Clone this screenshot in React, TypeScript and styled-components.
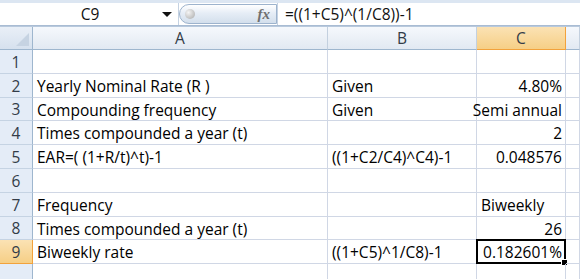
import React from 'react'
import styled, { createGlobalStyle } from 'styled-components'

const GlobalStyle = createGlobalStyle`
  html, body {
    margin: 0;
    padding: 0;
    background: #ffffff;
    overflow: hidden;
  }
  body {
    font-family: "Open Sans", "Liberation Sans", sans-serif;
  }
`

const Window = styled.div`
  width: 580px;
  height: 279px;
  overflow: hidden;
  display: flex;
  flex-direction: column;
  background: #ffffff;
`

const FormulaBar = styled.div`
  display: flex;
  align-items: stretch;
  border-top: 3px solid #dce6f2;
  border-bottom: 1px solid #a9bcd3;
  box-sizing: border-box;
  height: 32px;
`

const NameBox = styled.div`
  width: 179px;
  box-sizing: border-box;
  display: flex;
  align-items: center;
  border-right: 1px solid #c5d2e2;
  font-size: 15.5px;
  color: #111;
`

const NameText = styled.span`
  flex: 1;
  text-align: center;
  padding-left: 18px;
`

const DropArrow = styled.span`
  width: 0;
  height: 0;
  border-left: 5px solid transparent;
  border-right: 5px solid transparent;
  border-top: 5px solid #111;
  margin-right: 6px;
`

const FxPill = styled.div`
  width: 98px;
  box-sizing: border-box;
  margin: 1px 0;
  display: flex;
  align-items: center;
  justify-content: space-between;
  padding: 0 6px 0 5px;
  border: 1px solid #9db3cd;
  border-radius: 14px 0 0 14px;
  background: linear-gradient(#ffffff 0%, #e6edf6 45%, #d3dfec 100%);
`

const Knob = styled.span`
  width: 10px;
  height: 10px;
  border-radius: 50%;
  background: radial-gradient(circle at 35% 35%, #f4f4f4, #a8a8a8);
`

const FxLabel = styled.span`
  font-family: "Liberation Serif", serif;
  font-style: italic;
  font-weight: bold;
  font-size: 15px;
  color: #707070;
`

const FormulaText = styled.div`
  flex: 1;
  display: flex;
  align-items: center;
  padding-left: 7px;
  font-size: 15.5px;
  color: #111;
  border-left: 1px solid #c5d2e2;
`

const Gap = styled.div`
  height: 2px;
  border-bottom: 1px solid #b8c9dd;
  background: #f4f7fb;
`

const Sheet = styled.div`
  display: grid;
  grid-template-columns: 33px 295px 149px 89px 1fr;
`

const Corner = styled.div`
  height: 23px;
  box-sizing: border-box;
  position: relative;
  background: linear-gradient(#e9eff7, #d6e1ee);
  border-right: 1px solid #9eb6ce;
  border-bottom: 1px solid #9eb6ce;

  &::after {
    content: '';
    position: absolute;
    right: 3px;
    bottom: 3px;
    width: 0;
    height: 0;
    border-left: 13px solid transparent;
    border-bottom: 13px solid #c6d3e2;
  }
`

const ColHeader = styled.div<{ $active?: boolean }>`
  height: 23px;
  box-sizing: border-box;
  display: flex;
  align-items: center;
  justify-content: center;
  font-size: 15.5px;
  color: #333c48;
  background: ${p =>
    p.$active
      ? 'linear-gradient(#fbe2b4, #f6cf86)'
      : 'linear-gradient(#f5f8fc, #e2e9f2)'};
  border-right: 1px solid ${p => (p.$active ? '#f2a23c' : '#c3d0df')};
  border-bottom: 1px solid ${p => (p.$active ? '#f2a23c' : '#9eb6ce')};
`

const RowHeader = styled.div<{ $h: number; $active?: boolean }>`
  height: ${p => p.$h}px;
  box-sizing: border-box;
  display: flex;
  align-items: center;
  justify-content: center;
  font-size: 15.5px;
  color: #333c48;
  background: ${p => (p.$active ? 'linear-gradient(#fbe2b4, #f6cf86)' : '#e4ecf7')};
  border-right: 1px solid ${p => (p.$active ? '#f2a23c' : '#9eb6ce')};
  border-bottom: 1px solid ${p => (p.$active ? '#f2a23c' : '#c5d3e3')};
`

const Cell = styled.div<{ $h: number; $right?: boolean }>`
  height: ${p => p.$h}px;
  box-sizing: border-box;
  position: relative;
  display: flex;
  align-items: center;
  justify-content: ${p => (p.$right ? 'flex-end' : 'flex-start')};
  padding: 1px 3px 0 4px;
  font-size: 15.5px;
  color: #000;
  white-space: nowrap;
  border-right: 1px solid #d0d7e5;
  border-bottom: 1px solid #d0d7e5;
`

const Selection = styled.div`
  position: absolute;
  left: -1px;
  top: -1px;
  right: -1px;
  bottom: -1px;
  border: 2px solid #000;
  pointer-events: none;

  &::after {
    content: '';
    position: absolute;
    right: -4px;
    bottom: -4px;
    width: 5px;
    height: 5px;
    background: #000;
    border: 1px solid #fff;
  }
`

type Row = { n: number; h: number; a?: string; b?: string; c?: string; cRight?: boolean }

const rows: Row[] = [
  { n: 1, h: 24 },
  { n: 2, h: 24, a: 'Yearly Nominal Rate (R )', b: 'Given', c: '4.80%', cRight: true },
  { n: 3, h: 23, a: 'Compounding frequency', b: 'Given', c: 'Semi annual', cRight: true },
  { n: 4, h: 24, a: 'Times compounded a year (t)', c: '2', cRight: true },
  { n: 5, h: 24, a: 'EAR=( (1+R/t)^t)-1', b: '((1+C2/C4)^C4)-1', c: '0.048576', cRight: true },
  { n: 6, h: 24 },
  { n: 7, h: 24, a: 'Frequency', c: 'Biweekly' },
  { n: 8, h: 23, a: 'Times compounded a year (t)', c: '26', cRight: true },
  { n: 9, h: 24, a: 'Biweekly rate', b: '((1+C5)^1/C8)-1', c: '0.182601%', cRight: true },
  { n: 10, h: 24 },
]

export default function App() {
  return (
    <Window>
      <GlobalStyle />
      <FormulaBar>
        <NameBox>
          <NameText>C9</NameText>
          <DropArrow />
        </NameBox>
        <FxPill>
          <Knob />
          <FxLabel>fx</FxLabel>
        </FxPill>
        <FormulaText>=((1+C5)^(1/C8))-1</FormulaText>
      </FormulaBar>
      <Gap />
      <Sheet>
        <Corner />
        <ColHeader>A</ColHeader>
        <ColHeader>B</ColHeader>
        <ColHeader $active>C</ColHeader>
        <ColHeader />
        {rows.map(r => (
          <React.Fragment key={r.n}>
            <RowHeader $h={r.h} $active={r.n === 9}>{r.n < 10 ? r.n : ''}</RowHeader>
            <Cell $h={r.h}>{r.a}</Cell>
            <Cell $h={r.h}>{r.b}</Cell>
            <Cell $h={r.h} $right={r.cRight}>
              {r.c}
              {r.n === 9 && <Selection />}
            </Cell>
            <Cell $h={r.h} />
          </React.Fragment>
        ))}
      </Sheet>
    </Window>
  )
}
